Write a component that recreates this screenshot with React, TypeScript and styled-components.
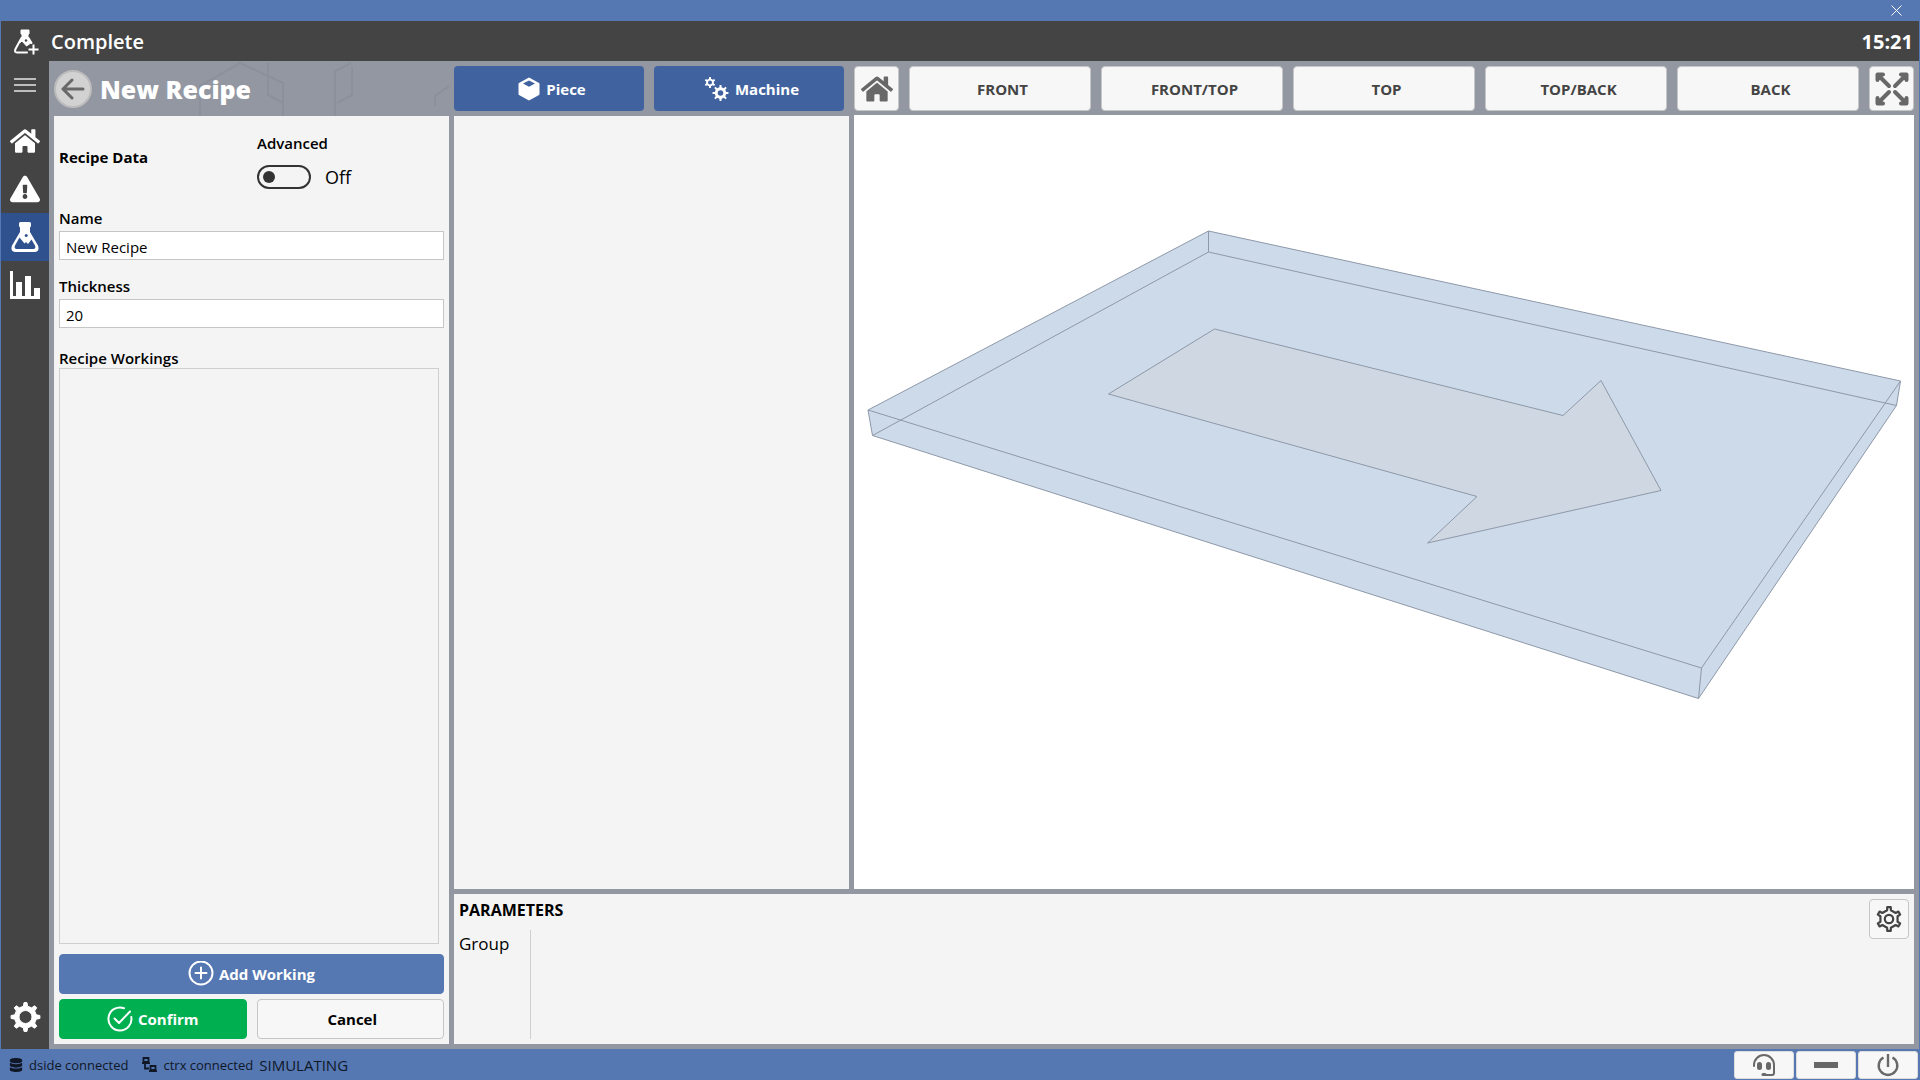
import React from "react";
import styled, { createGlobalStyle } from "styled-components";
import { FaDatabase, FaExclamationTriangle, FaHome } from "react-icons/fa";

const color = {
  blue: "#5577b2",
  blueDeep: "#4063a0",
  blueActive: "#2f528f",
  green: "#00b050",
  dark: "#444444",
  frame: "#9297a1",
  panel: "#f4f4f4",
  button: "#f7f7f7",
  line: "#c6c6c6",
  icon: "#686868",
};

const GlobalStyle = createGlobalStyle`
  *, *::before, *::after { box-sizing: border-box; }
  body {
    margin: 0;
    font-family: "Open Sans", "Noto Sans", sans-serif;
    font-size: 15px;
    line-height: 20px;
    color: #000;
  }
  button, input { font: inherit; color: inherit; }
  button { cursor: pointer; }
  h1, h2, p, ul { margin: 0; padding: 0; }
  svg { display: block; flex: none; }
`;

/* ---------- frame ---------- */

const Window = styled.div`
  display: flex;
  flex-direction: column;
  min-height: 100vh;
  background: ${color.blue};
`;

const TitleBar = styled.div`
  display: flex;
  justify-content: flex-end;
  height: 21px;
  padding-right: 16px;
`;

const CloseButton = styled.button`
  display: grid;
  place-items: center;
  width: 16px;
  padding: 0;
  border: 0;
  background: none;
`;

const AppHeader = styled.header`
  display: flex;
  align-items: center;
  gap: 11px;
  height: 40px;
  margin: 0 1px;
  padding: 2px 6px 0 12px;
  background: ${color.dark};
  color: #fff;
  font-size: 20px;
  font-weight: 600;
`;

const Clock = styled.time`
  margin-left: auto;
  font-weight: 700;
`;

const Body = styled.div`
  display: flex;
  flex: 1;
  margin: 0 1px;
`;

const Sidebar = styled.nav`
  display: flex;
  flex-direction: column;
  width: 48px;
  background: ${color.dark};
`;

const NavButton = styled.button<{ $active?: boolean }>`
  display: grid;
  place-items: center;
  height: 48px;
  padding: 0;
  border: 0;
  color: #fff;
  background: ${(p) => (p.$active ? color.blueActive : "transparent")};
`;

const NavGroup = styled.div`
  display: flex;
  flex-direction: column;
  flex: 1;
  padding-top: 8px;
`;

const NavBottom = styled.div`
  display: grid;
  padding-bottom: 8px;
`;

const Workspace = styled.main`
  position: relative;
  display: flex;
  flex: 1;
  gap: 5px;
  min-width: 0;
  padding: 0 5px 5px;
  background: ${color.frame};
`;

const Backdrop = styled.svg`
  position: absolute;
  top: 0;
  left: 0;
  pointer-events: none;
`;

const Column = styled.div`
  position: relative;
  display: flex;
  flex-direction: column;
  min-width: 0;
`;

const RecipeColumn = styled(Column)`
  width: 395px;
`;

const PageHead = styled.div`
  display: flex;
  align-items: center;
  gap: 8px;
  height: 55px;
`;

const BackButton = styled.button`
  display: grid;
  place-items: center;
  width: 38px;
  height: 38px;
  padding: 0;
  border: 2px solid #bcbcbc;
  border-radius: 50%;
  background: #d2d2d2;
`;

const PageTitle = styled.h1`
  color: #fff;
  font-size: 25px;
  line-height: 32px;
  font-weight: 800;
`;

const Panel = styled.section`
  flex: 1;
  background: ${color.panel};
`;

/* ---------- recipe form ---------- */

const RecipePanel = styled(Panel)`
  display: flex;
  flex-direction: column;
  padding: 0 5px 5px;
`;

const FormHead = styled.div`
  display: grid;
  grid-template-columns: 198px 1fr;
  padding-top: 17px;
  height: 92px;
`;

const SectionTitle = styled.h2`
  padding-top: 14px;
  font-size: 15px;
  line-height: 20px;
  font-weight: 700;
`;

const SwitchField = styled.div`
  display: flex;
  flex-direction: column;
  gap: 10px;
  font-weight: 600;
`;

const SwitchRow = styled.label`
  display: flex;
  align-items: center;
  gap: 14px;
  font-size: 18px;
  line-height: 28px;
  font-weight: 400;
`;

const Switch = styled.input`
  appearance: none;
  display: flex;
  align-items: center;
  width: 54px;
  height: 24px;
  margin: 0;
  padding: 0 4px;
  border: 2px solid #333;
  border-radius: 12px;

  &::before {
    content: "";
    width: 12px;
    height: 12px;
    border-radius: 50%;
    background: #333;
  }

  &:checked {
    justify-content: flex-end;
  }
`;

const Field = styled.div`
  display: flex;
  flex-direction: column;
  gap: 3px;
  margin-bottom: 16px;
`;

const Label = styled.label`
  font-weight: 600;
`;

const TextInput = styled.input`
  width: 100%;
  height: 29px;
  padding: 2px 6px 0;
  border: 1px solid ${color.line};
  background: #fff;
  outline: none;
`;

const ListTitle = styled.h2`
  margin-top: 4px;
  font-size: 15px;
  line-height: 20px;
  font-weight: 600;
`;

const WorkingList = styled.ul`
  flex: 1;
  margin: 0 5px 10px 0;
  border: 1px solid #cfcfcf;
  list-style: none;
`;

const Actions = styled.div`
  display: grid;
  grid-template-columns: 1fr 1fr;
  gap: 5px 10px;
`;

const ActionButton = styled.button<{ $tone?: string; $wide?: boolean }>`
  display: flex;
  align-items: center;
  justify-content: center;
  gap: 5px;
  height: 40px;
  padding: 0 0 0 ${(p) => (p.$tone ? 0 : 4)}px;
  grid-column: ${(p) => (p.$wide ? "1 / -1" : "auto")};
  border: 1px solid ${(p) => p.$tone ?? color.line};
  border-radius: 4px;
  background: ${(p) => p.$tone ?? color.button};
  color: ${(p) => (p.$tone ? "#fff" : "#000")};
  font-weight: 700;
`;

/* ---------- work area ---------- */

const WorkArea = styled.div`
  position: relative;
  display: grid;
  flex: 1;
  grid-template-columns: 395px 1fr;
  grid-template-rows: 1fr 150px;
  gap: 5px;
  min-width: 0;
`;

const Toolbar = styled.div`
  display: flex;
  gap: 10px;
  padding: 5px 0 4px;
`;

const TabBar = styled(Toolbar)`
  padding: 5px 5px 5px 0;
`;

const TabButton = styled.button`
  display: flex;
  flex: 1;
  align-items: center;
  justify-content: center;
  gap: 6px;
  height: 45px;
  padding: 0 0 0 6px;
  border: 0;
  border-radius: 4px;
  background: ${color.blueDeep};
  color: #fff;
  font-weight: 700;
`;

const ViewButton = styled.button<{ $square?: boolean }>`
  display: grid;
  place-items: center;
  flex: ${(p) => (p.$square ? "0 0 45px" : "1 1 0")};
  height: 45px;
  padding: 0 0 0 ${(p) => (p.$square ? 0 : 5)}px;
  border: 1px solid ${color.line};
  border-radius: 4px;
  background: ${color.button};
  color: ${(p) => (p.$square ? color.icon : color.dark)};
  font-weight: 700;
`;

const Viewport = styled.section`
  display: flex;
  flex: 1;
  background: #fff;
`;

const Scene = styled.svg`
  width: 100%;
  height: auto;
  align-self: flex-start;
`;

const Parameters = styled.section`
  display: flex;
  grid-column: 1 / -1;
  justify-content: space-between;
  padding: 5px;
  background: ${color.panel};
`;

const ParameterTable = styled.div`
  display: flex;
  flex-direction: column;
`;

const ParameterTitle = styled.h2`
  padding: 1px 0 10px;
  font-size: 16px;
  line-height: 20px;
  font-weight: 700;
`;

const ParameterGroup = styled.div`
  flex: 1;
  width: 72px;
  padding-top: 2px;
  border-right: 1px solid #cfcfcf;
  font-size: 17px;
  line-height: 24px;
  font-weight: 500;
`;

const SettingsButton = styled(ViewButton)`
  flex: 0 0 40px;
  height: 40px;
  padding: 0;
  color: ${color.dark};
`;

/* ---------- status bar ---------- */

const StatusBar = styled.footer`
  display: flex;
  align-items: center;
  gap: 6px;
  height: 31px;
  padding: 0 2px 0 9px;
  color: #101828;
`;

const StatusItem = styled.span`
  display: flex;
  align-items: center;
  gap: 6px;
  margin-right: 8px;
  font-size: 13px;
`;

const LastStatus = styled(StatusItem)`
  margin-right: 0;
`;

const StatusMode = styled.span`
  font-size: 15px;
`;

const StatusActions = styled.div`
  display: flex;
  gap: 2px;
  margin-left: auto;
`;

const StatusButton = styled.button`
  display: grid;
  place-items: center;
  width: 60px;
  height: 28px;
  padding: 0;
  border: 1px solid #dcdcdc;
  border-radius: 3px;
  background: ${color.button};
  color: ${color.icon};
`;

/* ---------- icons ---------- */

function gearPath(cx: number, cy: number, outer: number, inner: number, teeth: number, start = 0, top = 0.17, base = 0.27) {
  const step = (Math.PI * 2) / teeth;
  const at = (r: number, a: number) =>
    `${(cx + r * Math.sin(a)).toFixed(2)} ${(cy - r * Math.cos(a)).toFixed(2)}`;
  const points: string[] = [];
  for (let i = 0; i < teeth; i++) {
    const a = start + i * step;
    points.push(at(inner, a - step * base), at(outer, a - step * top), at(outer, a + step * top), at(inner, a + step * base));
  }
  return `M${points.join("L")}Z`;
}

function ringHole(cx: number, cy: number, r: number) {
  return `M${cx - r} ${cy}a${r} ${r} 0 1 0 ${r * 2} 0a${r} ${r} 0 1 0 ${-r * 2} 0Z`;
}

const CloseIcon = () => (
  <svg width="11" height="11" viewBox="0 0 11 11" stroke="#fff" strokeWidth="1">
    <path d="M.5.5l10 10M10.5.5l-10 10" />
  </svg>
);

const FlaskPlusIcon = () => (
  <svg width="27" height="26" viewBox="0 0 27 26" fill="none">
    <path d="M8 1h8v4h-1v4l3.500 4.500-5 3.500-4.500-5-2 1.500L9 9V5H8z" fill="#fff" stroke="#fff" strokeLinejoin="round" />
    <path d="M8.500 9L2.500 20q-1.500 3.500 1.500 3.500h10M15.500 9l3 5" stroke="#fff" strokeWidth="2" strokeLinecap="round" />
    <path d="M20.500 15.500v10M15.500 20.500h10" stroke="#fff" strokeWidth="2" />
    <circle cx="13" cy="11.500" r="1.200" fill={color.dark} />
  </svg>
);

const MenuIcon = () => (
  <svg width="22" height="16" viewBox="0 0 22 16" stroke="#bdbdbd" strokeWidth="2">
    <path d="M0 2h22M0 8h22M0 14h22" />
  </svg>
);

const FlaskIcon = () => (
  <svg width="28" height="30" viewBox="0 0 28 30">
    <path
      fillRule="evenodd"
      fill="currentColor"
      d="M9.500 0h9q1.500 0 1.500 1.500v2q0 1.500-1 2v4.500l8 13.500q2 6.500-3.500 6.500h-19q-5.500 0-3.500-6.500L9 10V5.500q-1-.5-1-2v-2Q8 0 9.500 0zM8.500 15.500L4 23.500q-1.200 3.500 1.500 3.500h17q2.700 0 1.500-3.500l-3.500-6-3.500 4.500-2-2-1.500 1.500-5-6z"
    />
    <circle cx="15.200" cy="13.500" r="1.500" fill={color.blueActive} />
  </svg>
);

const ChartIcon = () => (
  <svg width="30" height="28" viewBox="0 0 30 28" fill="currentColor">
    <path d="M0 0h3v25h3V11h6v14h3V5h6v20h3v-8h6v11H0z" />
  </svg>
);

const GearIcon = () => (
  <svg width="32" height="32" viewBox="0 0 32 32">
    <path
      fillRule="evenodd"
      fill="currentColor"
      stroke="currentColor"
      strokeWidth="1"
      strokeLinejoin="round"
      d={gearPath(16.5, 16, 14.5, 11, 8, 0, 0.13, 0.25) + ringHole(16.5, 16, 6.5)}
    />
  </svg>
);

const OutlineGearIcon = () => (
  <svg width="28" height="28" viewBox="0 0 28 28" fill="none" stroke="currentColor" strokeWidth="2.200" strokeLinejoin="round">
    <path d={gearPath(14, 14, 12, 9, 6, 0, 0.14, 0.2)} />
    <circle cx="14" cy="14" r="4.200" />
  </svg>
);

const ArrowLeftIcon = () => (
  <svg width="24" height="24" viewBox="0 0 24 24" fill="none" stroke={color.icon} strokeWidth="3" strokeLinecap="round" strokeLinejoin="round">
    <path d="M22 12H2M11 3l-9 9 9 9" />
  </svg>
);

const CubeIcon = () => (
  <svg width="22" height="24" viewBox="0 0 22 24">
    <path d="M11 .5L21 6q.5.300.5 1v10q0 .7-.5 1l-10 5.500L1 18q-.5-.3-.5-1V7q0-.7.5-1z" fill="#fff" />
    <path d="M11 3.500l6 3-6 3.200-6-3.200z" fill={color.blueDeep} />
  </svg>
);

const GearsIcon = () => (
  <svg width="24" height="24" viewBox="0 0 24 24" fill="#fff" fillRule="evenodd">
    <path d={gearPath(5, 5.5, 5.5, 4, 6, 0, 0.16, 0.24) + ringHole(5, 5.5, 2)} />
    <path d={gearPath(15.5, 16, 8, 5.8, 8, 0, 0.15, 0.24) + ringHole(15.5, 16, 2.8)} />
  </svg>
);

const ExpandIcon = () => (
  <svg width="34" height="34" viewBox="0 0 34 34" fill="none" stroke="currentColor" strokeWidth="4" strokeLinecap="round" strokeLinejoin="round">
    <path d="M2.500 8V2.500H8M3 3l11 11M26 2.500h5.500V8M31 3L20 14M2.500 26v5.500H8M3 31l11-11M26 31.500h5.500V26M31 31L20 20" />
  </svg>
);

const PlusCircleIcon = () => (
  <svg width="26" height="26" viewBox="0 0 26 26" fill="none" stroke="#fff" strokeWidth="2" strokeLinecap="round">
    <circle cx="13" cy="12" r="11.500" />
    <path d="M13 6.500v11M7.500 12h11" />
  </svg>
);

const CheckCircleIcon = () => (
  <svg width="26" height="26" viewBox="0 0 26 26" fill="none" stroke="#fff" strokeWidth="2" strokeLinecap="round" strokeLinejoin="round">
    <path d="M17 2.200A11.500 11.500 0 1 0 24.300 11M7.500 12.500l4.500 4.500L23 5.500" />
  </svg>
);

const NetworkIcon = () => (
  <svg width="15" height="15" viewBox="0 0 15 15" fill="none" stroke="currentColor" strokeWidth="1.800">
    <path d="M1.500 1h5v4h-5zM8.500 9h5v4h-5zM0 6.200h8M7 14.200h8M3 6v5.500h4" />
  </svg>
);

const HeadsetIcon = () => (
  <svg width="24" height="24" viewBox="0 0 24 24" fill="none" stroke="currentColor" strokeWidth="2" strokeLinecap="round">
    <path d="M2 13v-1a10 10 0 0 1 20 0v8q0 2-2 2h-6" />
    <rect x="6" y="10" width="3" height="6" rx="1.500" fill="currentColor" />
    <rect x="15" y="10" width="3" height="6" rx="1.500" fill="currentColor" />
    <path d="M11 21.500h2" strokeWidth="3" />
  </svg>
);

const MinusIcon = () => (
  <svg width="24" height="6" viewBox="0 0 24 6">
    <path d="M0 0h24v6H0z" fill="currentColor" />
  </svg>
);

const PowerIcon = () => (
  <svg width="24" height="24" viewBox="0 0 24 24" fill="none" stroke="currentColor" strokeWidth="2.400">
    <path d="M7.500 4.500a9.300 9.300 0 1 0 9 0M12 1v13" />
  </svg>
);

/* ---------- 3D preview ---------- */

const PieceScene = () => (
  <Scene viewBox="0 0 1060 770" fill="none" stroke="#8d98a8" strokeWidth="1" role="img" aria-label="Piece preview">
    <path d="M14 295L354.500 116 1046.500 266 1042.500 290.500 844.500 583.500 18.500 320.500z" fill="#cddaea" />
    <path d="M14 295L847.500 553 1046.500 266M847.500 553L844.500 583.500" />
    <path d="M354.500 116V137L18.500 320.500M354.500 137L1042.500 290.500" />
    <path d="M360.500 214L709 300.500 747 265.500 807 375.500 573.500 428 623 381.500 254.500 279z" fill="#cfd8e2" />
  </Scene>
);

const views = ["FRONT", "FRONT/TOP", "TOP", "TOP/BACK", "BACK"];

export default function App() {
  return (
    <Window>
      <GlobalStyle />
      <TitleBar>
        <CloseButton aria-label="Close"><CloseIcon /></CloseButton>
      </TitleBar>
      <AppHeader>
        <FlaskPlusIcon />
        <span>Complete</span>
        <Clock>15:21</Clock>
      </AppHeader>
      <Body>
        <Sidebar>
          <NavButton aria-label="Menu"><MenuIcon /></NavButton>
          <NavGroup>
            <NavButton aria-label="Home"><FaHome size={30} /></NavButton>
            <NavButton aria-label="Alarms"><FaExclamationTriangle size={30} /></NavButton>
            <NavButton aria-label="Recipes" $active><FlaskIcon /></NavButton>
            <NavButton aria-label="Statistics"><ChartIcon /></NavButton>
          </NavGroup>
          <NavBottom>
            <NavButton aria-label="Settings"><GearIcon /></NavButton>
          </NavBottom>
        </Sidebar>
        <Workspace>
          <Backdrop width="400" height="55" viewBox="0 0 400 55" fill="none" stroke="#8b909a" strokeWidth="2">
            <path d="M151 55V25L191 2l43 20v33M219 2v32l15 8M286 55V10l16-8M303 6v28l-15 8M400 25l-14 10v10" />
          </Backdrop>
          <RecipeColumn>
            <PageHead>
              <BackButton aria-label="Back"><ArrowLeftIcon /></BackButton>
              <PageTitle>New Recipe</PageTitle>
            </PageHead>
            <RecipePanel>
              <FormHead>
                <SectionTitle>Recipe Data</SectionTitle>
                <SwitchField>
                  <label htmlFor="advanced">Advanced</label>
                  <SwitchRow>
                    <Switch id="advanced" type="checkbox" role="switch" />
                    Off
                  </SwitchRow>
                </SwitchField>
              </FormHead>
              <Field>
                <Label htmlFor="name">Name</Label>
                <TextInput id="name" defaultValue="New Recipe" />
              </Field>
              <Field>
                <Label htmlFor="thickness">Thickness</Label>
                <TextInput id="thickness" defaultValue="20" />
              </Field>
              <ListTitle>Recipe Workings</ListTitle>
              <WorkingList />
              <Actions>
                <ActionButton $tone={color.blue} $wide><PlusCircleIcon />Add Working</ActionButton>
                <ActionButton $tone={color.green}><CheckCircleIcon />Confirm</ActionButton>
                <ActionButton>Cancel</ActionButton>
              </Actions>
            </RecipePanel>
          </RecipeColumn>
          <WorkArea>
            <Column>
              <TabBar>
                <TabButton><CubeIcon />Piece</TabButton>
                <TabButton><GearsIcon />Machine</TabButton>
              </TabBar>
              <Panel />
            </Column>
            <Column>
              <Toolbar>
                <ViewButton $square aria-label="Default view"><FaHome size={32} /></ViewButton>
                {views.map((view) => (
                  <ViewButton key={view}>{view}</ViewButton>
                ))}
                <ViewButton $square aria-label="Full screen"><ExpandIcon /></ViewButton>
              </Toolbar>
              <Viewport><PieceScene /></Viewport>
            </Column>
            <Parameters>
              <ParameterTable>
                <ParameterTitle>PARAMETERS</ParameterTitle>
                <ParameterGroup>Group</ParameterGroup>
              </ParameterTable>
              <SettingsButton aria-label="Parameter settings"><OutlineGearIcon /></SettingsButton>
            </Parameters>
          </WorkArea>
        </Workspace>
      </Body>
      <StatusBar>
        <StatusItem><FaDatabase size={14} />dside connected</StatusItem>
        <LastStatus><NetworkIcon />ctrx connected</LastStatus>
        <StatusMode>SIMULATING</StatusMode>
        <StatusActions>
          <StatusButton aria-label="Support"><HeadsetIcon /></StatusButton>
          <StatusButton aria-label="Minimize"><MinusIcon /></StatusButton>
          <StatusButton aria-label="Power"><PowerIcon /></StatusButton>
        </StatusActions>
      </StatusBar>
    </Window>
  );
}
